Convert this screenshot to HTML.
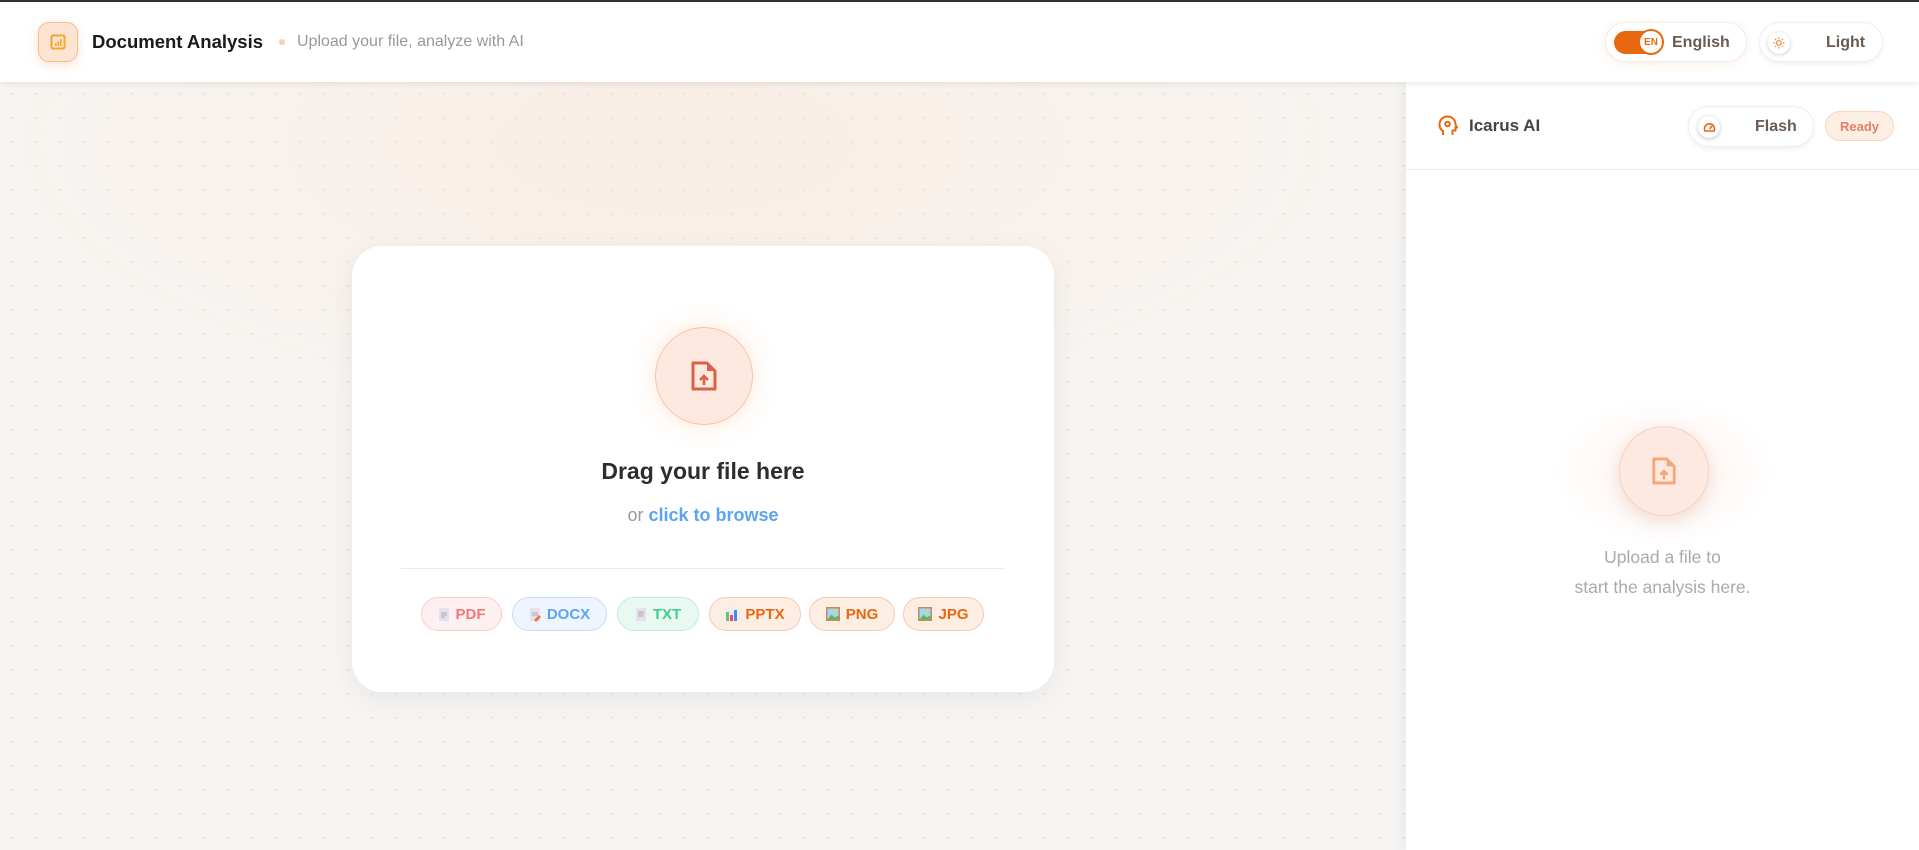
<!DOCTYPE html>
<html><head><meta charset="utf-8"><style>
*{box-sizing:border-box;margin:0;padding:0}
body{width:1919px;height:850px;overflow:hidden;font-family:"Liberation Sans",sans-serif;background:#f7f5f3;position:relative}
.topbar{position:absolute;left:0;top:0;width:1919px;height:2px;background:#333}
.header{position:absolute;left:0;top:2px;width:1919px;height:80px;background:#fff;box-shadow:0 2px 6px rgba(0,0,0,.08);z-index:3}
.logo{position:absolute;left:38px;top:20px;width:40px;height:40px;border-radius:11px;background:#fde3d2;border:1px solid #f7bd92;box-shadow:0 3px 10px rgba(240,140,80,.25);display:flex;align-items:center;justify-content:center}
.title{position:absolute;left:92px;top:29px;font-size:18.5px;font-weight:bold;color:#1a1a1a}
.dot{position:absolute;left:279px;top:37px;width:6px;height:6px;border-radius:50%;background:#f6d0b8}
.sub{position:absolute;left:297px;top:31px;font-size:16px;color:#999}
.pill{position:absolute;background:#fff;border:1px solid #eee;border-radius:22px;box-shadow:0 2px 6px rgba(0,0,0,.06);font-weight:bold;color:#6b5a52;font-size:16px}
.main{position:absolute;left:0;top:82px;width:1406px;height:768px;background-color:#f7f5f3;background-image:radial-gradient(circle,#e6e1dc 1px,transparent 1.2px),radial-gradient(ellipse 55% 40% at 48% 8%,rgba(250,230,215,.55),transparent 100%);background-size:24px 24px,100% 100%}
.card{position:absolute;left:352px;top:246px;width:702px;height:446px;background:#fff;border-radius:30px;box-shadow:0 8px 30px rgba(0,0,0,.06)}
.circ{position:absolute;border-radius:50%;background:#fde9df;border:1px solid #f7c4a2;box-shadow:0 0 24px rgba(248,170,120,.3);display:flex;align-items:center;justify-content:center}
.chip{position:absolute;top:597px;height:34px;border-radius:17px;font-size:15px;font-weight:bold;display:flex;align-items:center;justify-content:center;gap:6px}
.panel{position:absolute;left:1406px;top:82px;width:513px;height:768px;background:#fff;box-shadow:-4px 0 12px rgba(0,0,0,.05)}
</style></head><body>
<div class="topbar"></div>
<div class="header">
  <div class="logo"><svg width="16" height="16" viewBox="0 0 16 16"><rect x="1.5" y="1.5" width="13" height="13" rx="1.5" fill="none" stroke="#f5a623" stroke-width="2"/><rect x="5" y="9" width="1.6" height="3" fill="#f5a623"/><rect x="7.5" y="7" width="1.6" height="5" fill="#f5a623"/><rect x="10" y="5" width="1.6" height="7" fill="#f5a623"/></svg></div>
  <div class="title">Document Analysis</div>
  <div class="dot"></div>
  <div class="sub">Upload your file, analyze with AI</div>
  <div class="pill" style="left:1605px;top:20px;width:142px;height:40px;box-shadow:0 2px 10px rgba(240,140,80,.15)">
    <div style="position:absolute;left:8px;top:8px;width:48px;height:23px;border-radius:12px;background:#e8680f"></div>
    <div style="position:absolute;left:32px;top:6px;width:26px;height:26px;border-radius:50%;background:#fff;border:2px solid #e8680f;color:#e8680f;font-size:10px;display:flex;align-items:center;justify-content:center">EN</div>
    <div style="position:absolute;left:66px;top:11px">English</div>
  </div>
  <div class="pill" style="left:1759px;top:20px;width:124px;height:40px">
    <div style="position:absolute;left:8px;top:9px;width:22px;height:22px;border-radius:50%;background:#fff;box-shadow:0 1px 4px rgba(0,0,0,.2);display:flex;align-items:center;justify-content:center"><svg width="12" height="12" viewBox="0 0 12 12" stroke="#f08030" stroke-width="1.2" fill="none"><circle cx="6" cy="6" r="2.3"/><path d="M6 0.5v1.5M6 10v1.5M0.5 6h1.5M10 6h1.5M2 2l1 1M9 9l1 1M2 10l1-1M9 3l1-1"/></svg></div>
    <div style="position:absolute;left:66px;top:11px">Light</div>
  </div>
</div>
<div class="main">
</div>
<div class="card">
  <div class="circ" style="left:303px;top:81px;width:98px;height:98px"><svg width="28" height="32" viewBox="0 0 28 32"><path d="M3 3h14l8 8v18H3z" fill="none" stroke="#d9634a" stroke-width="3" stroke-linejoin="round"/><path d="M17 3v8h8z" fill="#d9634a"/><path d="M14 25v-8M10 20l4-4 4 4" stroke="#d9634a" stroke-width="2.6" fill="none"/></svg></div>
  <div style="position:absolute;left:0;width:702px;top:212px;text-align:center;font-size:23px;font-weight:bold;color:#2d2d2d">Drag your file here</div>
  <div style="position:absolute;left:0;width:702px;top:259px;text-align:center;font-size:18px;color:#999">or <b style="color:#5ba4f5">click to browse</b></div>
  <div style="position:absolute;left:49px;top:322px;width:604px;height:1px;background:#fbe6da"></div>
</div>
<div class="chip" style="left:421px;width:81px;background:#fdf0f0;border:1px solid #f9cccc;color:#f07878"><svg width="12" height="15"><rect x="1" y="1" width="10" height="13" fill="#e6e0ee"/><path d="M3 6h6M3 8h6M3 10h4" stroke="#aaa"/></svg>PDF</div>
<div class="chip" style="left:512px;width:95px;background:#eef5fe;border:1px solid #c6ddfa;color:#5ba4f5"><svg width="12" height="15"><rect x="1" y="1" width="10" height="13" fill="#e6e0ee"/><path d="M3 6h6M3 8h6" stroke="#aaa"/><path d="M5 13l5-5 2 2-5 5z" fill="#f07040"/></svg>DOCX</div>
<div class="chip" style="left:617px;width:82px;background:#e9f9f2;border:1px solid #bdeed8;color:#3ccf8e"><svg width="12" height="15"><rect x="1" y="1" width="10" height="13" fill="#e6e0ee"/><path d="M3 5h6M3 7h6M3 9h5" stroke="#aaa"/></svg>TXT</div>
<div class="chip" style="left:709px;width:92px;background:#fdeee4;border:1px solid #f5c9ac;color:#e8680f"><svg width="14" height="14"><rect x="0" y="0" width="14" height="14" fill="#eee"/><rect x="1" y="5" width="3" height="9" fill="#6cc070"/><rect x="5" y="8" width="3" height="6" fill="#e84880"/><rect x="9" y="3" width="3" height="11" fill="#4a8ae8"/></svg>PPTX</div>
<div class="chip" style="left:809px;width:86px;background:#fdeee4;border:1px solid #f5c9ac;color:#e8680f"><svg width="14" height="14"><rect width="14" height="14" fill="#c98a5a"/><rect x="1.5" y="1.5" width="11" height="11" fill="#9fd8f5"/><path d="M1.5 12.5l4-5 3 3 4-2v4z" fill="#5cb85c"/><circle cx="9" cy="4.5" r="1.5" fill="#f5d040"/></svg>PNG</div>
<div class="chip" style="left:903px;width:81px;background:#fdeee4;border:1px solid #f5c9ac;color:#e8680f"><svg width="14" height="14"><rect width="14" height="14" fill="#c98a5a"/><rect x="1.5" y="1.5" width="11" height="11" fill="#9fd8f5"/><path d="M1.5 12.5l4-5 3 3 4-2v4z" fill="#5cb85c"/><circle cx="9" cy="4.5" r="1.5" fill="#f5d040"/></svg>JPG</div>
<div class="panel">
  <div style="position:absolute;left:0;top:87px;width:513px;height:1px;background:#eee"></div>
  <svg style="position:absolute;left:32px;top:33px" width="20" height="22" viewBox="0 0 20 22" fill="none" stroke="#e8680f" stroke-width="2"><path d="M5 20v-4C2.5 14.5 1.5 12 1.5 9.5 1.5 5 5 1.5 9.5 1.5S17.5 5 17.5 9.5l1.5 3h-1.5v3h-3v4.5"/><circle cx="9.5" cy="9" r="2.3"/></svg>
  <div style="position:absolute;left:63px;top:34px;font-size:17px;font-weight:bold;color:#444">Icarus AI</div>
  <div class="pill" style="left:282px;top:24px;width:126px;height:41px">
    <div style="position:absolute;left:9px;top:9px;width:22px;height:22px;border-radius:50%;background:#fff;box-shadow:0 1px 4px rgba(0,0,0,.25);display:flex;align-items:center;justify-content:center"><svg width="13" height="12" viewBox="0 0 13 12" fill="none" stroke="#e8680f" stroke-width="1.6"><path d="M2 10A5 5 0 1 1 11 10z"/><path d="M6.5 8l2.5-3"/></svg></div>
    <div style="position:absolute;left:66px;top:11px">Flash</div>
  </div>
  <div style="position:absolute;left:419px;top:29px;width:69px;height:30px;border-radius:15px;background:#fdeee4;border:1px solid #f8d6c0;color:#e0806a;font-size:13px;font-weight:bold;display:flex;align-items:center;justify-content:center">Ready</div>
  <div style="position:absolute;left:138px;top:309px;width:240px;height:160px;border-radius:50%;background:radial-gradient(ellipse,rgba(252,230,220,.5),transparent 65%)"></div>
  <div class="circ" style="left:213px;top:344px;width:90px;height:90px;background:#fde9df;border-color:#f8d3bd;box-shadow:0 6px 18px rgba(200,140,110,.25)"><svg width="26" height="30" viewBox="0 0 28 32"><path d="M3 3h14l8 8v18H3z" fill="none" stroke="#f5a57a" stroke-width="3" stroke-linejoin="round"/><path d="M17 3v8h8z" fill="#f5a57a"/><path d="M14 25v-8M10 20l4-4 4 4" stroke="#f5a57a" stroke-width="2.6" fill="none"/></svg></div>
  <div style="position:absolute;left:0;width:513px;top:460px;text-align:center;font-size:17.5px;line-height:30px;color:#aaa">Upload a file to<br>start the analysis here.</div>
</div>
</body></html>
